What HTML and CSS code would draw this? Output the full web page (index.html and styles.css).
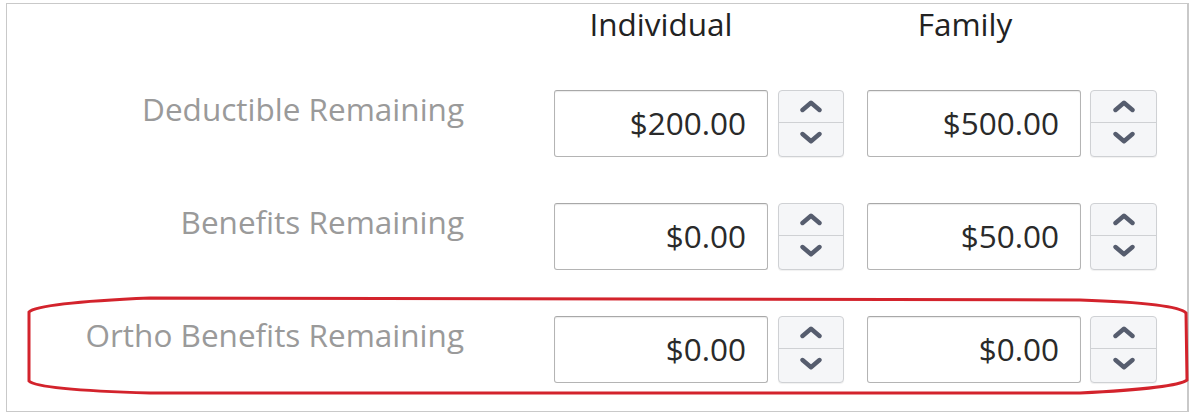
FILE: index.html
```html
<!DOCTYPE html>
<html>
<head>
<meta charset="utf-8">
<link rel="stylesheet" href="styles.css">
</head>
<body>
<div class="panel">
  <div class="head">
    <div class="hcell">Individual</div>
    <div class="hcell fam">Family</div>
  </div>
  <div class="rows">
    <div class="row">
      <div class="label">Deductible Remaining</div>
      <div class="field"><div class="input">$200.00</div><div class="spin"><span class="up"><svg viewBox="0 0 24 13"><polyline points="3.5,10 12,2.8 20.5,10"/></svg></span><span class="down"><svg viewBox="0 0 24 13"><polyline points="3.5,3 12,10.2 20.5,3"/></svg></span></div></div>
      <div class="field f2"><div class="input">$500.00</div><div class="spin"><span class="up"><svg viewBox="0 0 24 13"><polyline points="3.5,10 12,2.8 20.5,10"/></svg></span><span class="down"><svg viewBox="0 0 24 13"><polyline points="3.5,3 12,10.2 20.5,3"/></svg></span></div></div>
    </div>
    <div class="row">
      <div class="label">Benefits Remaining</div>
      <div class="field"><div class="input">$0.00</div><div class="spin"><span class="up"><svg viewBox="0 0 24 13"><polyline points="3.5,10 12,2.8 20.5,10"/></svg></span><span class="down"><svg viewBox="0 0 24 13"><polyline points="3.5,3 12,10.2 20.5,3"/></svg></span></div></div>
      <div class="field f2"><div class="input">$50.00</div><div class="spin"><span class="up"><svg viewBox="0 0 24 13"><polyline points="3.5,10 12,2.8 20.5,10"/></svg></span><span class="down"><svg viewBox="0 0 24 13"><polyline points="3.5,3 12,10.2 20.5,3"/></svg></span></div></div>
    </div>
    <div class="row">
      <div class="label">Ortho Benefits Remaining</div>
      <div class="field"><div class="input">$0.00</div><div class="spin"><span class="up"><svg viewBox="0 0 24 13"><polyline points="3.5,10 12,2.8 20.5,10"/></svg></span><span class="down"><svg viewBox="0 0 24 13"><polyline points="3.5,3 12,10.2 20.5,3"/></svg></span></div></div>
      <div class="field f2"><div class="input">$0.00</div><div class="spin"><span class="up"><svg viewBox="0 0 24 13"><polyline points="3.5,10 12,2.8 20.5,10"/></svg></span><span class="down"><svg viewBox="0 0 24 13"><polyline points="3.5,3 12,10.2 20.5,3"/></svg></span></div></div>
    </div>
  </div>
</div>
<svg class="mark" viewBox="0 0 1196 415" width="1196" height="415">
  <path d="M150,298 L1080,300 C1140,302 1180,306 1186,313 L1187,380 C1180,386 1140,390 1080,393 L150,393 C80,391 35,387 29,381 L29,312 C35,306 80,301 150,298 Z"/>
</svg>
</body>
</html>
```
FILE: styles.css
```css
html, body {
  margin: 0;
  padding: 0;
  background: #fff;
}
body {
  font-family: "Open Sans", "DejaVu Sans", sans-serif;
  position: relative;
  width: 1196px;
  height: 415px;
  overflow: hidden;
}
.panel {
  box-sizing: border-box;
  margin: 3px 0 0 6px;
  width: 1183px;
  height: 409px;
  border: 1px solid #c9c9c9;
  border-right-width: 2px;
}
.head {
  display: flex;
  padding-left: 547px;
  padding-top: 0;
  height: 40px;
}
.hcell {
  width: 214px;
  text-align: center;
  font-size: 31.5px;
  line-height: 40px;
  color: #222;
}
.hcell.fam {
  margin-left: 99px;
  padding-right: 18px;
  box-sizing: border-box;
}
.rows {
  display: flex;
  flex-direction: column;
  gap: 46px;
  margin-top: 46px;
}
.row {
  display: flex;
  align-items: flex-start;
  height: 67px;
}
.label {
  width: 457px;
  text-align: right;
  font-size: 31.5px;
  line-height: 40px;
  margin-top: -1px;
  color: #9a9a9a;
}
.field {
  display: flex;
  margin-left: 90px;
  gap: 10px;
}
.field.f2 {
  margin-left: 23px;
  gap: 9px;
}
.input {
  box-sizing: border-box;
  width: 214px;
  height: 67px;
  border: 1.5px solid #b4b4b4;
  border-top-color: #a8a8a8;
  border-radius: 3px;
  box-shadow: inset 0 1px 1px rgba(0,0,0,0.08);
  text-align: right;
  padding-right: 21px;
  font-size: 31.5px;
  line-height: 63px;
  color: #2a2a2a;
}
.spin {
  box-sizing: border-box;
  width: 66px;
  height: 67px;
  display: flex;
  flex-direction: column;
  border: 1.5px solid #cfd1d4;
  border-radius: 4px;
  background: #f5f6f8;
  box-shadow: 0 1px 1px rgba(0,0,0,0.06);
}
.f2 .spin {
  width: 67px;
}
.spin span {
  display: flex;
  align-items: center;
  justify-content: center;
}
.spin .up {
  height: 31px;
  border-bottom: 1.5px solid #cfd1d4;
}
.spin .down {
  flex: 1;
  padding-bottom: 5px;
}
.spin svg {
  width: 24px;
  height: 13px;
  flex: none;
}
.spin polyline {
  fill: none;
  stroke: #565d6e;
  stroke-width: 4.4;
  stroke-linecap: round;
  stroke-linejoin: round;
}
.mark {
  position: absolute;
  left: 0;
  top: 0;
  pointer-events: none;
}
.mark path {
  fill: none;
  stroke: #d3232c;
  stroke-width: 3;
}
```
